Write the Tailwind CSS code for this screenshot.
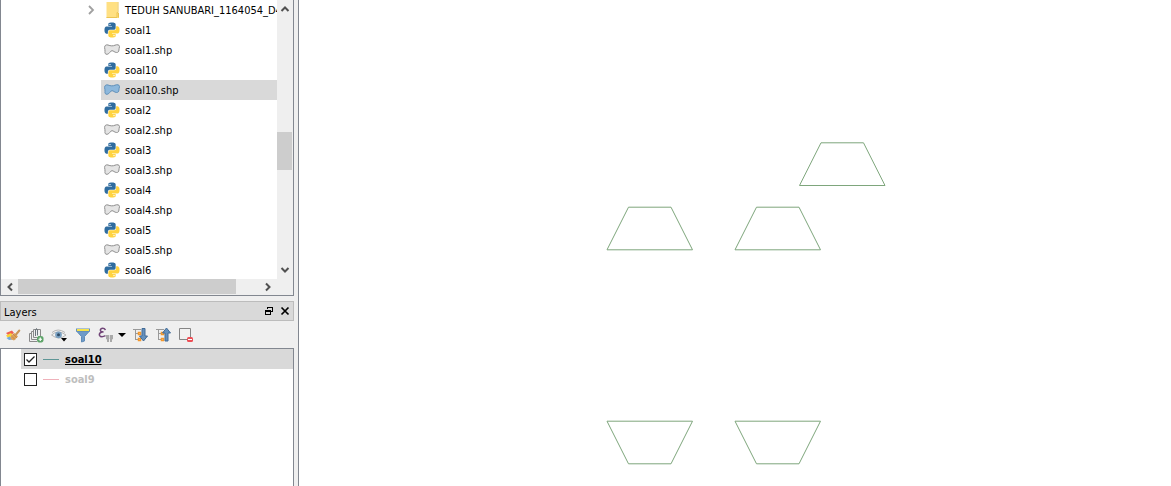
<!DOCTYPE html>
<html lang="en">
<head>
<meta charset="utf-8">
<meta name="viewport" content="width=device-width, initial-scale=1">
<title>Layers</title>
<script src="https://cdn.jsdelivr.net/npm/@tailwindcss/browser@4"></script>
</head>
<body class="flex h-screen overflow-hidden bg-white font-[Tahoma,'DejaVu_Sans_Condensed','DejaVu_Sans',sans-serif] text-[11px] leading-5 text-black">

<svg class="hidden" aria-hidden="true">
  <symbol id="python" viewBox="-0.8 -0.8 25.6 25.6">
    <path fill="#2f6c9f" d="M14.25.18l.9.2.73.26.59.3.45.32.34.34.25.34.16.33.1.3.04.26.02.2-.01.13V8.5l-.05.63-.13.55-.21.46-.26.38-.3.31-.33.25-.35.19-.35.14-.33.1-.3.07-.26.04-.21.02H8.77l-.69.05-.59.14-.5.22-.41.27-.33.32-.27.35-.2.36-.15.37-.1.35-.07.32-.04.27-.02.21v3.06H3.17l-.21-.03-.28-.07-.32-.12-.35-.18-.36-.26-.36-.36-.35-.46-.32-.59-.28-.73-.21-.88-.14-1.05-.05-1.23.06-1.22.16-1.04.24-.87.32-.71.36-.57.4-.44.42-.33.42-.24.4-.16.36-.1.32-.05.24-.01h.16l.06.01h8.16v-.83H6.18l-.01-2.75-.02-.37.05-.34.11-.31.17-.28.25-.26.31-.23.38-.2.44-.18.51-.15.58-.12.64-.1.71-.06.77-.04.84-.02 1.27.05z"/>
    <path fill="#ffd340" transform="rotate(180 12 12)" d="M14.25.18l.9.2.73.26.59.3.45.32.34.34.25.34.16.33.1.3.04.26.02.2-.01.13V8.5l-.05.63-.13.55-.21.46-.26.38-.3.31-.33.25-.35.19-.35.14-.33.1-.3.07-.26.04-.21.02H8.77l-.69.05-.59.14-.5.22-.41.27-.33.32-.27.35-.2.36-.15.37-.1.35-.07.32-.04.27-.02.21v3.06H3.17l-.21-.03-.28-.07-.32-.12-.35-.18-.36-.26-.36-.36-.35-.46-.32-.59-.28-.73-.21-.88-.14-1.05-.05-1.23.06-1.22.16-1.04.24-.87.32-.71.36-.57.4-.44.42-.33.42-.24.4-.16.36-.1.32-.05.24-.01h.16l.06.01h8.16v-.83H6.18l-.01-2.75-.02-.37.05-.34.11-.31.17-.28.25-.26.31-.23.38-.2.44-.18.51-.15.58-.12.64-.1.71-.06.77-.04.84-.02 1.27.05z"/>
    <circle cx="8.8" cy="3.3" r="1.1" fill="#fff"/><circle cx="15.2" cy="20.7" r="1.1" fill="#fff"/>
  </symbol>
  <symbol id="shape" viewBox="0 0 16 16">
    <path d="M.6 5.500C.6 3.200 2.200 2.500 4 3C6.500 4 9 4.200 11 3.200C13 2.300 15.500 2.600 15.500 4.600C15.500 6 14.800 6.800 14.900 8C15 9.600 14 10.600 12.500 10.500C10.500 10.400 9.500 8.700 8 8.700C6.300 8.700 5.500 12 3.200 12.300C1.200 12.500 .7 11 1 9.500C1.300 8 .6 7 .6 5.500Z"/>
  </symbol>
</svg>

<aside class="flex w-[299px] shrink-0 flex-col border-r border-[#828790] bg-[#efefef] pr-1">
  <section aria-label="Browser" class="border-x border-b border-[#828790]">
    <div class="flex">
      <ul class="h-[279px] min-w-0 flex-1 overflow-hidden bg-white whitespace-nowrap">
        <li class="flex h-5 items-center pl-[84px]">
          <button aria-label="Expand" class="mr-2 size-3"><svg viewBox="0 0 12 12" class="size-3 fill-none stroke-[#a0a0a0]" stroke-width="1.800"><path d="M4 2l4 4-4 4"/></svg></button>
          <svg viewBox="0 0 16 16" class="mr-1 size-4 shrink-0"><path d="M1.500 0H12.500V10L14 11V16H1.500Z" fill="#ffe083"/><path d="M1.500 15.500H12V10.500L13.500 11V15.500M13 0V10" fill="none" stroke="#ebc453"/></svg>
          <span class="pt-0.5">TEDUH SANUBARI_1164054_D4</span>
        </li>
        <li class="flex h-5 items-center gap-[5px] pl-[103px]"><svg class="size-4"><use href="#python"/></svg><span class="pt-0.5">soal1</span></li>
        <li class="flex h-5 items-center gap-[5px] pl-[103px]"><svg class="size-4 fill-[#e4e4e4] stroke-[#8e8e8e]"><use href="#shape"/></svg><span class="pt-0.5">soal1.shp</span></li>
        <li class="flex h-5 items-center gap-[5px] pl-[103px]"><svg class="size-4"><use href="#python"/></svg><span class="pt-0.5">soal10</span></li>
        <li aria-current="true" class="ml-[100px] flex h-5 items-center gap-[5px] bg-[#d9d9d9] pl-[3px]"><svg class="size-4 fill-[#8db8dc] stroke-[#5f8fb8]"><use href="#shape"/></svg><span class="pt-0.5">soal10.shp</span></li>
        <li class="flex h-5 items-center gap-[5px] pl-[103px]"><svg class="size-4"><use href="#python"/></svg><span class="pt-0.5">soal2</span></li>
        <li class="flex h-5 items-center gap-[5px] pl-[103px]"><svg class="size-4 fill-[#e4e4e4] stroke-[#8e8e8e]"><use href="#shape"/></svg><span class="pt-0.5">soal2.shp</span></li>
        <li class="flex h-5 items-center gap-[5px] pl-[103px]"><svg class="size-4"><use href="#python"/></svg><span class="pt-0.5">soal3</span></li>
        <li class="flex h-5 items-center gap-[5px] pl-[103px]"><svg class="size-4 fill-[#e4e4e4] stroke-[#8e8e8e]"><use href="#shape"/></svg><span class="pt-0.5">soal3.shp</span></li>
        <li class="flex h-5 items-center gap-[5px] pl-[103px]"><svg class="size-4"><use href="#python"/></svg><span class="pt-0.5">soal4</span></li>
        <li class="flex h-5 items-center gap-[5px] pl-[103px]"><svg class="size-4 fill-[#e4e4e4] stroke-[#8e8e8e]"><use href="#shape"/></svg><span class="pt-0.5">soal4.shp</span></li>
        <li class="flex h-5 items-center gap-[5px] pl-[103px]"><svg class="size-4"><use href="#python"/></svg><span class="pt-0.5">soal5</span></li>
        <li class="flex h-5 items-center gap-[5px] pl-[103px]"><svg class="size-4 fill-[#e4e4e4] stroke-[#8e8e8e]"><use href="#shape"/></svg><span class="pt-0.5">soal5.shp</span></li>
        <li class="flex h-5 items-center gap-[5px] pl-[103px]"><svg class="size-4"><use href="#python"/></svg><span class="pt-0.5">soal6</span></li>
      </ul>
      <div class="flex w-4 flex-col items-center">
        <button aria-label="Scroll up" class="flex h-[18px] w-full items-center justify-center"><svg viewBox="0 0 10 10" class="size-2.5 fill-none stroke-[#505050]" stroke-width="2"><path d="M1.500 7L5 3.500L8.500 7"/></svg></button>
        <div class="w-full flex-1 pt-[114px]"><div class="h-[38px] w-[15px] bg-[#cdcdcd]"></div></div>
        <button aria-label="Scroll down" class="flex h-[18px] w-full items-center justify-center"><svg viewBox="0 0 10 10" class="size-2.5 fill-none stroke-[#505050]" stroke-width="2"><path d="M1.500 3L5 6.500L8.500 3"/></svg></button>
      </div>
    </div>
    <div class="flex h-4 pr-4 pb-px">
      <button aria-label="Scroll left" class="flex w-[17px] items-center justify-center"><svg viewBox="0 0 10 10" class="size-2.5 fill-none stroke-[#505050]" stroke-width="2"><path d="M7 1.500L3.500 5L7 8.500"/></svg></button>
      <div class="flex-1"><div class="h-full w-[218px] bg-[#cdcdcd]"></div></div>
      <button aria-label="Scroll right" class="flex w-[18px] items-center justify-center"><svg viewBox="0 0 10 10" class="size-2.5 fill-none stroke-[#505050]" stroke-width="2"><path d="M3 1.500L6.500 5L3 8.500"/></svg></button>
    </div>
  </section>

  <header class="mt-[5px] flex h-5 items-center border border-[#bcbcbc] bg-[#d9d9d9] pr-[3px] pl-[3px]">
    <h2 class="flex-1 pt-1">Layers</h2>
    <button aria-label="Float panel" class="mr-1.5"><svg viewBox="0 0 10 10" class="size-2.5 fill-none stroke-black" shape-rendering="crispEdges"><path d="M3.500 3V1.500H8.500V5.500H7M1.500 8.500V4.500H6.500V8.500ZM3 1H9M1 5H7"/></svg></button>
    <button aria-label="Close panel"><svg viewBox="0 0 10 10" class="size-2.5 fill-none stroke-black" stroke-width="1.700"><path d="M1.500 1.500L8.500 8.500M8.500 1.500L1.500 8.500"/></svg></button>
  </header>

  <div role="toolbar" aria-label="Layer tools" class="flex h-[27px] items-center pl-[5px]">
    <button aria-label="Layer styling" class="mr-[7px]"><svg viewBox="0 0 16 16" class="size-4"><path d="M1 6L7 3.500L9 6L4 9Z" fill="#f0604f"/><path d="M1 8.500L6 6L8 9L3 11Z" fill="#fbd335"/><path d="M1.500 11L5 9.500L8 12.500L4 13Z" fill="#72a9dd"/><path d="M6 8.500L9.500 6L13 9.500L9 13.500L5.500 12Z" fill="#dca159"/><path d="M8 7L12 11M7 9.500L10 12.500" stroke="#c08442" stroke-width=".8"/><path d="M11 7.500L14.300 3.500" stroke="#c89557" stroke-width="2" stroke-linecap="round"/></svg></button>
    <button aria-label="Add group" class="mr-[7px]"><svg viewBox="0 0 16 16" class="size-4 fill-none stroke-[#8a8a8a]"><path d="M4 6.500H1.500V14.500H9M6 4.500H3.500V12.500H9M5.500 2.500H12.500V9"/><path d="M5.500 2.500V10.500H9"/><path d="M7.500 9V3Q8.500 0 9.500 3V8.500" stroke="#6c757c"/><rect x="9.500" y="9.500" width="5.500" height="5.500" rx="1.500" fill="#5da468" stroke="#5da468"/><path d="M12.250 10.500v3.500M10.500 12.250h3.500" stroke="#fff" stroke-width="1.200"/></svg></button>
    <button aria-label="Manage map themes" class="mr-2"><svg viewBox="0 0 16 16" class="size-4"><path d="M.5 8Q7 2 15 8Q8 14 .5 8Z" fill="#f3f4f4" stroke="#b4b4b4"/><path d="M1 5.500Q7 .5 14 5.500" fill="none" stroke="#b5b5b5"/><circle cx="7.500" cy="7.800" r="3.400" fill="#7ba1c2"/><circle cx="7.500" cy="7.800" r="1.500" fill="#2e4b66"/><path d="M10 11h6l-3 3.500z" fill="#000"/></svg></button>
    <button aria-label="Filter legend" class="mr-[7px]"><svg viewBox="0 0 16 16" class="size-4"><path d="M1.500 4L6.500 9.500V15L9.500 14V9.500L14.500 4Z" fill="#6f9bc8" stroke="#5f8cb8"/><path d="M1 1.500H15V4L13.500 5H2.500L1 4Z" fill="#648fb9"/><path d="M2 3H14" stroke="#f6e34b" stroke-width="2"/></svg></button>
    <button aria-label="Filter by expression" class="mr-1"><svg viewBox="0 0 16 16" class="size-4"><path d="M7.500 3Q6 .8 3.700 1.500Q1.500 2.500 3 4.500L5.500 5H4Q.8 6 1.500 8.300Q3 11 7.500 8.700" fill="none" stroke="#714578" stroke-width="1.500"/><path d="M8 8H15V12L14 12.500V15H12V11.500H11V15H9V12.500L8 12Z" fill="#a9a9a9"/><path d="M11.500 8V11.500" stroke="#ddd"/></svg></button>
    <button aria-label="Filter options" class="mr-[7px]"><svg viewBox="0 0 8 4" class="h-1 w-2"><path d="M0 0h8L4 4z"/></svg></button>
    <button aria-label="Expand all" class="mr-[7px]"><svg viewBox="0 0 16 16" class="size-4"><path d="M0 2.500H8M2.500 2.500V13M3 6.500H5M3 12.500H5" fill="none" stroke="#999"/><path d="M5.500 5.500h2v2h-2zM5.500 11.500h2v2h-2z" fill="#fff" stroke="#f3972c" stroke-width="1.500"/><path d="M9 1.500h3V9h2.500l-4 5-4-5H9Z" fill="#6490bd" stroke="#426b96"/></svg></button>
    <button aria-label="Collapse all" class="mr-[7px]"><svg viewBox="0 0 16 16" class="size-4"><path d="M0 2.500H8M2.500 2.500V13M3 6.500H5M3 12.500H5" fill="none" stroke="#999"/><path d="M5.500 5.500h2v2h-2zM5.500 11.500h2v2h-2z" fill="#fff" stroke="#f3972c" stroke-width="1.500"/><path d="M9 14V6H6.500l4-5 4 5H12V14Z" fill="#6490bd" stroke="#426b96"/></svg></button>
    <button aria-label="Remove layer"><svg viewBox="0 0 16 16" class="size-4"><path d="M.5 1.500H11.500V12.500H.5Z" fill="#f1f1f1" stroke="#858585"/><rect x="8" y="10" width="6" height="5" rx="1.500" fill="#ed4f56"/><path d="M9 12.500H13" stroke="#fff"/></svg></button>
  </div>

  <ul aria-label="Layers" class="flex-1 border border-b-0 border-[#828790] bg-white font-bold">
    <li class="ml-5 flex h-5 items-center bg-[#d9d9d9] pl-[3px]">
      <input id="l10" type="checkbox" checked class="peer size-[13px] appearance-none border border-[#222] bg-white">
      <svg viewBox="0 0 13 13" class="pointer-events-none invisible -ml-[13px] size-[13px] fill-none stroke-[#222] peer-checked:visible" stroke-width="1.300"><path d="M2.500 6.500L5 9L10.500 3.500"/></svg>
      <span class="mx-1.5 h-px w-4 bg-[#5e9696]"></span>
      <label for="l10" class="pt-0.5 underline">soal10</label>
    </li>
    <li class="ml-5 flex h-5 items-center pl-[3px] text-[#bebebe]">
      <input id="l9" type="checkbox" class="peer size-[13px] appearance-none border border-[#222] bg-white">
      <svg viewBox="0 0 13 13" class="pointer-events-none invisible -ml-[13px] size-[13px] fill-none stroke-[#222] peer-checked:visible" stroke-width="1.300"><path d="M2.500 6.500L5 9L10.500 3.500"/></svg>
      <span class="mx-1.5 h-px w-4 bg-[#efb1ba]"></span>
      <label for="l9" class="pt-0.5">soal9</label>
    </li>
  </ul>
</aside>

<main class="min-w-0 flex-1 overflow-hidden">
  <svg role="img" aria-label="Map canvas" viewBox="299 0 872 486" preserveAspectRatio="xMinYMin meet" class="h-full w-full fill-none stroke-[#7ea67c]" stroke-width="1">
    <path d="M799.500 185.500L821 142.800H863.500L885 185.500Z"/>
    <path d="M607 249.800L628.500 207.200H671L692.500 249.800Z"/>
    <path d="M735 249.800L756.500 207.200H799L820.500 249.800Z"/>
    <path d="M607 421.200H692.500L671 463.800H628.500Z"/>
    <path d="M735 421.200H820.500L799 463.800H756.500Z"/>
  </svg>
</main>
</body>
</html>
